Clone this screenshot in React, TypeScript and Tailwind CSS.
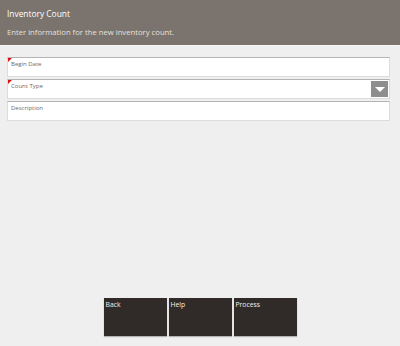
import React from "react";

function Field({ label, required, dropdown }: { label: string; required?: boolean; dropdown?: boolean }) {
  return (
    <div className="relative h-[20px] bg-white border border-[#dcdcdc] border-t-[#b4b4b4] flex">
      {required && (
        <div className="absolute left-0 top-0 w-0 h-0 border-t-[4px] border-t-[#e01010] border-r-[4px] border-r-transparent" />
      )}
      <div className="flex-1 pl-[3px] pt-[3px] text-[6px] leading-[7px] text-[#6a6a6a]">{label}</div>
      {dropdown && (
        <div className="w-[17px] my-[1px] mr-[1px] bg-[#8e8e8e] flex items-center justify-center">
          <div className="w-0 h-0 border-l-[5px] border-l-transparent border-r-[5px] border-r-transparent border-t-[5px] border-t-white" />
        </div>
      )}
    </div>
  );
}

export default function App() {
  return (
    <div className="w-[400px] h-[346px] bg-[#efefef] flex flex-col" style={{ fontFamily: '"Open Sans", "Noto Sans", sans-serif' }}>
      <div className="h-[45px] bg-[#7b736d] flex flex-col px-[7px] shrink-0">
        <div className="pt-[8px] text-[8.4px] leading-[11px] text-white">Inventory Count</div>
        <div className="pt-[8px] text-[7.7px] leading-[11px] text-[#e4e1de]">Enter information for the new inventory count.</div>
      </div>
      <div className="h-[1px] bg-[#f8f8f8]" />
      <div className="flex-1 flex flex-col">
        <div className="flex flex-col gap-[2px] pl-[7px] pr-[10px] pt-[11px]">
          <Field label="Begin Date" required />
          <Field label="Count Type" required dropdown />
          <Field label="Description" />
        </div>
        <div className="flex-1" />
        <div className="flex justify-center gap-[2px] pb-[10px]">
          {["Back", "Help", "Process"].map((b) => (
            <div key={b} className="w-[63px] h-[38px] bg-[#302a28] text-[6.8px] leading-[8px] text-[#f0eeee] px-[2px] pt-[3px] shadow-[0_1px_1px_rgba(0,0,0,0.25)]">
              {b}
            </div>
          ))}
        </div>
      </div>
    </div>
  );
}
